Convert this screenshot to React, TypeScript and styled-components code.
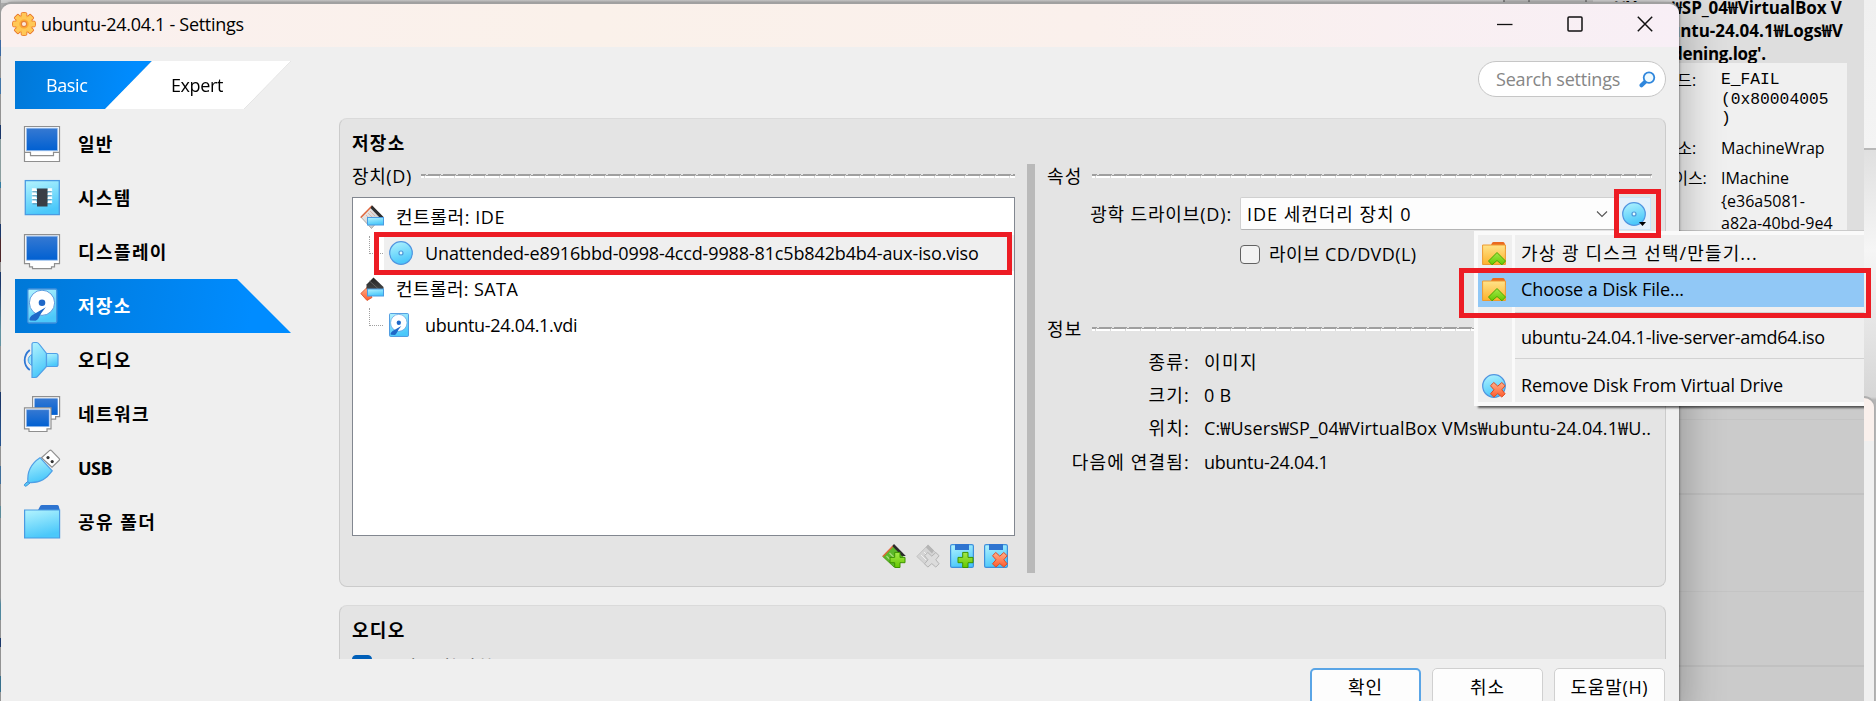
import React from 'react';
import styled, { createGlobalStyle, css } from 'styled-components';

const Global = createGlobalStyle`
  * { box-sizing: border-box; }
  body { margin: 0; background: #cbcbcb; overflow: hidden; }
`;

const RED = '#ed1c24';
const FONT = '"Open Sans", "Noto Sans CJK KR", sans-serif';

const Desktop = styled.div`
  position: relative;
  width: 1876px;
  height: 701px;
  overflow: hidden;
  background: linear-gradient(#dadada, #d2d2d2 3px, #b4b4b4 3px);
  font-family: ${FONT};
  font-size: 18px;
  color: #000;
`;

const Label = styled.span<{ $s?: number; $size?: number; $bold?: boolean; $color?: string; $dy?: number }>`
  white-space: pre;
  line-height: 24px;
  letter-spacing: ${p => p.$s ?? 0}px;
  font-size: ${p => p.$size ?? 18}px;
  font-weight: ${p => (p.$bold ? 700 : 400)};
  color: ${p => p.$color ?? '#000'};
  margin-top: ${p => p.$dy ?? 0}px;
`;

/* ---------- background windows ---------- */

const EdgeStrip = styled.div`
  position: absolute;
  inset: 0 auto 0 0;
  width: 1px;
  background: linear-gradient(
    #a8a8a8 0 40px, #4478b8 40px 56px, #a8a8a8 56px 78px, #4b86bf 78px 94px, #a8a8a8 94px 125px, #1f3f78 125px 139px,
    #9fb4b4 139px 182px, #3c8fb8 182px 188px, #a8a8a8 188px 224px, #1f3f78 224px 236px, #5a2c30 240px 262px,
    #a8a8a8 262px 272px, #1f3f78 272px 284px, #72a8b8 330px 346px, #a8a8a8 346px 392px, #1f3f78 392px 404px,
    #2c5fa0 434px 446px, #a8a8a8 446px 466px, #4a7fb0 466px 484px, #a8a8a8 484px 506px, #6aa0b0 506px 518px,
    #a8a8a8 518px 598px, #5c9cb4 604px 620px, #a8a8a8 620px 638px, #1f3f78 638px 647px, #a8a8a8 647px 676px,
    #3f7fa0 676px 692px, #a8a8a8 692px
  );
`;

const TopTabs = styled.div`
  position: absolute;
  inset: 0 auto auto 1503px;
  width: 90px;
  height: 6px;
  display: grid;
  grid-template-columns: 25px 57px 8px;
  & > i { border-left: 2px solid #8e8e8e; background: #c9c9c9; }
`;

const BackDialog = styled.div`
  position: absolute;
  inset: 0 auto auto 1593px;
  width: 271px;
  height: 701px;
  display: flex;
  flex-direction: column;
  background: #cbcbcb;
`;

const ErrorText = styled.div`
  display: flex;
  flex-direction: column;
  height: 63px;
  flex: none;
  padding: 0 0 0 22px;
  background: #dedede;
  & > span { line-height: 23px; margin-top: 0; }
  & > span:first-child { margin-top: -4px; }
  & > span:nth-child(2) { padding-left: 22px; }
  & > span:nth-child(3) { margin-left: -4px; }
`;

const ErrorDetails = styled.div`
  display: grid;
  grid-template-columns: 92px 1fr;
  grid-template-rows: 68px 30px 1fr;
  height: 167px;
  flex: none;
  padding: 6px 0 0 36px;
  overflow: hidden;
  background: #f0f0f0;
  border-right: 17px solid #dedede;
`;

const Mono = styled.div`
  font: 16.3px/19.7px "Liberation Mono", monospace;
  padding-top: 1px;
  white-space: pre;
`;

const Cell = styled.div`
  font-size: 16px;
  line-height: 22.6px;
  white-space: pre;
`;

const GridRows = styled.div`
  flex: 1;
  padding-top: 189px;
  & > hr { margin: 0; border: 0; background: #c4c4c4; height: 1px; }
  & > hr:nth-child(even) { height: 2px; margin: 73px 0 96px; background: #c1c1c1; }
`;

const RightEdge = styled.div`
  position: absolute;
  inset: 0 0 0 1864px;
  display: flex;
  flex-direction: column;
  background: linear-gradient(#f0f0f0, #f4f4f4 148px, #b8b8b8 148px 150px, #e0e0e0 150px, #f6f6f6 250px, #d6d6d6 397px, #b4b4b4 400px);
`;

const CornerWindow = styled.div`
  margin: 396px 1px 0 0;
  flex: 1;
  border: solid #aeaeae;
  border-width: 2px 1px 0 0;
  border-top-right-radius: 11px;
  background: linear-gradient(#faf0ec 43px, #f0f0f0 43px);
`;

/* ---------- settings window ---------- */

const Window = styled.div`
  position: absolute;
  inset: 2px auto auto 1px;
  width: 1678px;
  height: 720px;
  display: flex;
  flex-direction: column;
  background: #efefef;
  border-top: 2px solid #a0a0a0;
  border-radius: 11px 11px 0 0;
  box-shadow: 1px 0 2px rgba(0, 0, 0, 0.3), 5px 2px 42px rgba(0, 0, 0, 0.27);
`;

const TitleBar = styled.div`
  height: 43px;
  flex: none;
  display: flex;
  align-items: center;
  padding: 0 26px 4px 11px;
  background: linear-gradient(90deg, #faf0ef, #faf1ea 35%, #faf0ec 65%, #f8eff6);
  border-radius: 10px 10px 0 0;
  & > span { margin-left: 5px; flex: 1; }
`;

const Caption = styled.div`
  display: flex;
  align-items: center;
  gap: 54px;
`;

const Header = styled.div`
  display: flex;
  justify-content: space-between;
  align-items: flex-start;
  height: 71px;
  padding: 14px 13px 0 14px;
`;

const Tabs = styled.div`
  display: flex;
  width: 278px;
  height: 48px;
  filter: drop-shadow(0 0 0.6px #aaa);
`;

const Tab = styled.div<{ $active?: boolean }>`
  display: flex;
  align-items: center;
  ${p => p.$active
    ? css`
        width: 137px;
        padding-left: 31px;
        background: linear-gradient(100deg, #0078d7, #008cff 85%);
        clip-path: polygon(0 0, 100% 0, 66% 100%, 0 100%);
      `
    : css`
        width: 186px;
        margin-left: -47px;
        padding-left: 66px;
        background: #fff;
        clip-path: polygon(47px 0, 100% 0, 139px 100%, 0 100%);
      `}
`;

const Search = styled.div`
  display: flex;
  align-items: center;
  justify-content: space-between;
  width: 188px;
  height: 36px;
  padding: 0 9px 0 17px;
  border: 1px solid #c6c6c6;
  border-radius: 18px;
  background: #fff;
`;

const Main = styled.div`
  display: flex;
  height: 541px;
  flex: none;
  overflow: hidden;
`;

const Nav = styled.div`
  width: 289px;
  margin: -1px 0 0 14px;
`;

const NavItem = styled.div<{ $active?: boolean }>`
  display: flex;
  align-items: center;
  height: 54px;
  padding-left: 8px;
  gap: 17px;
  & > svg { flex: none; }
  ${p => p.$active && css`
    width: 276px;
    background: linear-gradient(100deg, #0078d7, #008cff 85%);
    clip-path: polygon(0 0, 222px 0, 100% 100%, 0 100%);
  `}
`;

const Content = styled.div`
  flex: 1;
  padding: 0 13px 0 35px;
  display: flex;
  flex-direction: column;
  gap: 18px;
`;

const Panel = styled.div<{ $h: number }>`
  height: ${p => p.$h}px;
  flex: none;
  display: flex;
  flex-direction: column;
  padding: 12px 12px 0 12px;
  background: #e4e4e4;
  border: 1px solid #cbcbcb;
  border-top-color: #dadada;
  border-radius: 8px;
`;

const Columns = styled.div`
  display: flex;
  align-items: flex-start;
  margin-top: 9px;
`;

const DeviceColumn = styled.div`
  width: 663px;
  display: flex;
  flex-direction: column;
`;

const Splitter = styled.div`
  width: 8px;
  height: 409px;
  margin: 0 12px 0;
  background: #b9b9b9;
`;

const Attributes = styled.div`
  width: 605px;
  display: flex;
  flex-direction: column;
`;

const GroupTitle = styled.div<{ $after?: number }>`
  display: flex;
  align-items: center;
  height: 23px;
  gap: 9px;
  margin-bottom: ${p => p.$after ?? 0}px;
`;

const Rule = styled.i`
  flex: 1;
  height: 4px;
  background:
    repeating-linear-gradient(90deg, transparent 0 5px, #e4e4e4 5px 7px, transparent 7px 15px) 0 0 / 100% 1px no-repeat,
    repeating-linear-gradient(90deg, transparent 0 4px, #d4d4d4 4px 5px, transparent 5px 15px) 0 1px / 100% 1px no-repeat,
    repeating-linear-gradient(90deg, transparent 0 3px, #dcdcdc 3px 4px, transparent 4px 15px) 0 2px / 100% 2px no-repeat,
    linear-gradient(#9f9f9f 2px, #fff 2px);
`;

const Tree = styled.div`
  height: 339px;
  margin-top: 10px;
  padding: 1px 0 0;
  background: #fff;
  border: 1px solid #828790;
`;

const TreeRow = styled.div<{ $child?: boolean; $selected?: boolean }>`
  display: flex;
  align-items: center;
  height: 36px;
  padding-left: ${p => (p.$child ? 16 : 7)}px;
  background: ${p => (p.$selected ? 'linear-gradient(90deg, #fff 31px, #efefef 31px)' : 'none')};
`;

const Branch = styled.i`
  width: 14px;
  height: 18px;
  margin: -17px 6px 0 0;
  border: dotted #a0a0a0;
  border-width: 0 0 1px 1px;
`;

const IconSlot = styled.div<{ $w: number }>`
  display: flex;
  width: ${p => p.$w}px;
  flex: none;
`;

const TreeTools = styled.div`
  display: flex;
  justify-content: flex-end;
  gap: 10px;
  padding: 8px 7px 0 0;
`;

const Field = styled.div<{ $h: number; $label: number; $gap: number }>`
  display: grid;
  grid-template-columns: ${p => p.$label}px auto;
  column-gap: ${p => p.$gap}px;
  align-items: center;
  height: ${p => p.$h}px;
  & > span:first-child { text-align: right; }
`;

const ComboRow = styled.div`
  display: flex;
  align-items: center;
  width: 412px;
`;

const Combo = styled.div`
  display: flex;
  align-items: center;
  justify-content: space-between;
  width: 378px;
  height: 33px;
  padding: 0 9px 0 6px;
  background: #fdfdfd;
  border: 1px solid #d0d0d0;
  border-bottom-color: #b4b4b4;
  border-radius: 2px;
`;

const DiscButton = styled.div`
  position: relative;
  width: 33px;
  height: 33px;
  padding: 4px 0 0 3px;
  background: #e5f1fb;
  border: 1px solid #cce4f7;
`;

const Arrow = styled.svg`
  position: absolute;
  right: 4px;
  bottom: 3px;
`;

const CheckRow = styled.div`
  display: flex;
  align-items: center;
  gap: 9px;
  height: 30px;
  margin: 9px 0 48px 193px;
`;

const Check = styled.i<{ $on?: boolean }>`
  width: 20px;
  height: 19px;
  flex: none;
  border: 1px solid ${p => (p.$on ? '#005fb8' : '#626262')};
  border-radius: 4px;
  background: ${p => (p.$on ? '#005fb8' : '#f3f3f3')};
`;

const AudioCheck = styled.div`
  display: flex;
  align-items: flex-start;
  gap: 10px;
  margin-top: 13px;
`;

const Footer = styled.div`
  display: flex;
  justify-content: flex-end;
  gap: 11px;
  padding: 9px 14px 0 0;
`;

const Button = styled.div<{ $primary?: boolean }>`
  display: flex;
  justify-content: center;
  align-items: center;
  width: 111px;
  height: 37px;
  background: #fdfdfd;
  border: ${p => (p.$primary ? '2px solid #5aa5e6' : '1px solid #d0d0d0')};
  border-radius: 5px;
`;

/* ---------- overlays ---------- */

const Menu = styled.div`
  position: absolute;
  inset: 231px auto auto 1474px;
  width: 390px;
  height: 175px;
  padding: 4px 0 4px 4px;
  background:
    linear-gradient(#fafafa, #fafafa) 38px 0 / 3px 100% no-repeat,
    linear-gradient(#fafafa, #fafafa) 0 0 / 4px 100% no-repeat,
    linear-gradient(#fafafa, #fafafa) 0 0 / 100% 4px no-repeat,
    linear-gradient(#fafafa, #fafafa) 0 100% / 100% 4px no-repeat,
    #efefef;
  box-shadow: 3px 3px 2px -1px rgba(0, 0, 0, 0.6);
  clip-path: inset(0 0 -10px 0);
`;

const MenuItem = styled.div<{ $active?: boolean; $h?: number }>`
  display: flex;
  align-items: center;
  height: ${p => p.$h ?? 37}px;
  padding-left: 4px;
  background: ${p => (p.$active ? '#91c8f6' : 'none')};
`;

const MenuLine = styled.div<{ $m: string }>`
  height: 1px;
  margin: ${p => p.$m};
  background: #d2d2d2;
`;

const Highlight = styled.div<{ $x: number; $y: number; $w: number; $h: number }>`
  position: absolute;
  left: ${p => p.$x}px;
  top: ${p => p.$y}px;
  width: ${p => p.$w}px;
  height: ${p => p.$h}px;
  border: 5px solid ${RED};
`;

/* ---------- icons ---------- */

const HiddenSvg = styled.svg`
  position: absolute;
`;

const Defs = () => (
  <HiddenSvg width="0" height="0">
    <defs>
      <linearGradient id="sky" x1="0" y1="0" x2="0.3" y2="1"><stop offset="0" stopColor="#b4f4fe" /><stop offset="1" stopColor="#4bc8fa" /></linearGradient>
      <linearGradient id="screen" x1="0" y1="0" x2="0" y2="1"><stop offset="0" stopColor="#3679d2" /><stop offset="1" stopColor="#0060d2" /></linearGradient>
      <linearGradient id="green" x1="0" y1="0" x2="0" y2="1"><stop offset="0" stopColor="#a4e84a" /><stop offset="1" stopColor="#64c800" /></linearGradient>
      <linearGradient id="orange" x1="0" y1="0" x2="0" y2="1"><stop offset="0" stopColor="#ffb089" /><stop offset="1" stopColor="#ff5a2c" /></linearGradient>
      <linearGradient id="yellow" x1="0" y1="0" x2="0" y2="1"><stop offset="0" stopColor="#ffe389" /><stop offset="1" stopColor="#fdb22c" /></linearGradient>
      <linearGradient id="silver" x1="0" y1="0" x2="1" y2="1"><stop offset="0" stopColor="#f4f4f4" /><stop offset="1" stopColor="#bdbdbd" /></linearGradient>
      <linearGradient id="dark" x1="0" y1="0" x2="0" y2="1"><stop offset="0" stopColor="#222" /><stop offset="1" stopColor="#555" /></linearGradient>
    </defs>
  </HiddenSvg>
);

const Svg = ({ s = 24, children }: { s?: number; children: React.ReactNode }) => (
  <svg width={s} height={s} viewBox={`0 0 ${s} ${s}`} fill="none">{children}</svg>
);

const teeth = [0, 45, 90, 135, 180, 225, 270, 315];
const Gear = () => (
  <Svg>
    {teeth.map(a => <rect key={a} x="9.2" y="0.6" width="5.6" height="6" rx="1.2" fill="#ffc65a" stroke="#ea7a2c" transform={`rotate(${a} 12 12)`} />)}
    <circle cx="12" cy="12" r="8.7" fill="#ffc04c" stroke="#ee8a34" strokeWidth="0.9" />
    {teeth.map(a => <rect key={a} x="9.8" y="1.3" width="4.4" height="6" rx="0.8" fill="#ffc857" transform={`rotate(${a} 12 12)`} />)}
    <circle cx="12" cy="12" r="4.6" fill="#fdab34" />
    <circle cx="12" cy="12" r="2.6" fill="#fbe9dc" stroke="#e8813a" strokeWidth="1.1" />
  </Svg>
);

const General = () => (
  <Svg s={38}>
    <path d="M1.5 1.5h35v35h-35z" fill="#fff" stroke="#8f8f8f" strokeWidth="1.2" />
    <path d="M3.5 3.2h31v22.5h-31z" fill="url(#screen)" stroke="#9cc0ee" strokeWidth="0.8" />
    <path d="M1.5 27.4h6v3.2h23v-3.2h6" stroke="#8f8f8f" strokeWidth="1.2" />
  </Svg>
);

const Chip = () => (
  <Svg s={38}>
    <rect x="2.3" y="1.6" width="34" height="34" fill="url(#sky)" stroke="#4a9be2" strokeWidth="1.3" />
    {[11.5, 15.5, 19.5, 23.5].map(y => <path key={y} d={`M9.5 ${y}h19M9.5 ${y - 1.4}h3M25.5 ${y - 1.4}h3`} stroke="#fff" strokeWidth="1.6" strokeLinecap="round" />)}
    {[12.8, 16.8, 20.8, 24.8].map(y => <path key={y} d={`M9.5 ${y}h19`} stroke="#3d6f90" strokeWidth="0.7" />)}
    <rect x="14" y="9.5" width="10.5" height="18" fill="#393d46" />
  </Svg>
);

const Display = () => (
  <Svg s={38}>
    <path d="M1.5 1.6h35v29h-5v3.200h-3v1.800h-19v-1.800h-3v-3.200h-5z" fill="#fff" stroke="#8f8f8f" strokeWidth="1.2" />
    <path d="M3.5 3.2h31v24h-31z" fill="url(#screen)" stroke="#9cc0ee" strokeWidth="0.8" />
  </Svg>
);

const DiskArt = () => (
  <>
    <rect x="4.8" y="2" width="29" height="34" rx="1.5" fill="url(#sky)" stroke="#3f8fdc" strokeWidth="1.3" />
    <circle cx="19" cy="15.8" r="12.6" fill="#fff" stroke="#5b9be0" strokeWidth="1" />
    <circle cx="19" cy="15.8" r="3.3" fill="#1f68c8" />
    <path d="M22.8 20.3 9.5 28c-3.2 2.2-3.6 5-2.4 5.5l5.5.2c2.4-.4 3.6-3.8 5.6-7.4z" fill="#1f68c8" />
  </>
);
const Disk = () => <Svg s={38}><DiskArt /></Svg>;
const SmallDisk = () => (
  <svg width="20" height="24" viewBox="4 1.200 30.600 35.600" preserveAspectRatio="none" fill="none"><DiskArt /></svg>
);

const Speaker = () => (
  <Svg s={38}>
    <path d="M6.8 9c-6.8 5.4-6.8 15.5 0 20" stroke="#2f78d4" strokeWidth="1.8" />
    <path d="M8.6 13.5c-4.6 3-4.6 8 0 11z" fill="#8fe4fd" stroke="#4f9fe6" strokeWidth="1" />
    <path d="M9 3q0-1.5 2-1.5h2.5q1.5 0 2.6 1.5L23.5 12.5v13L15 34.8Q13.8 36.5 12 36.5H9z" fill="url(#sky)" stroke="#4f9fe6" strokeWidth="1.2" />
    <path d="M23.5 12.5h9.5q2 0 2 2v9q0 2-2 2h-9.5z" fill="url(#sky)" stroke="#4f9fe6" strokeWidth="1.2" />
  </Svg>
);

const Network = () => (
  <Svg s={38}>
    <path d="M9.6 1.6h27v20h-4v2.6h-19v-2.6h-4z" fill="#fff" stroke="#8f8f8f" strokeWidth="1.2" />
    <path d="M11.5 3.4h23.2v16.5h-23.2z" fill="url(#screen)" />
    <path d="M1.5 12.8h26.5v21h-4v2.7h-18v-2.7h-4.5z" fill="#fff" stroke="#8f8f8f" strokeWidth="1.2" />
    <path d="M3.4 14.6h22.8v17h-22.8z" fill="url(#screen)" stroke="#9cc0ee" strokeWidth="0.6" />
  </Svg>
);

const Usb = () => (
  <Svg s={38}>
    <path d="m18.5 8.8 8.2-7.4q1-.7 1.8.2l7.7 8q.8 1-.2 1.9l-7 6.800z" fill="#fff" stroke="#8f8f8f" strokeWidth="1.2" />
    <circle cx="25" cy="8.6" r="1.6" fill="#333" />
    <circle cx="29.2" cy="12.6" r="1.6" fill="#333" />
    <path d="M5.8 31.5 1.6 35.2q-.8 1.6.7 2 1.2.2 5.4-3.9z" fill="#5cc8f4" stroke="#3f93dc" strokeWidth="1" />
    <path d="M5 33.5c-1.4-12 4-19.5 12-24.8l12.2 13.2C24 29 18 34.6 5 33.5z" fill="url(#sky)" stroke="#4f9fe6" strokeWidth="1.2" />
  </Svg>
);

const Folder = () => (
  <Svg s={38}>
    <path d="M14.5 8 17.2 3q.5-1 1.8-1H34q1.5 0 1.8 1.2L37 8v4H14.5z" fill="#2e74d0" />
    <path d="M1.6 7h35v28h-35z" fill="url(#sky)" stroke="#4a9be2" strokeWidth="1.2" />
  </Svg>
);

const Disc = () => (
  <Svg>
    <circle cx="12" cy="12" r="11.3" fill="url(#sky)" stroke="#5095e0" strokeWidth="1.2" />
    <circle cx="12" cy="12" r="2" fill="#e4fbff" stroke="#4f97d8" strokeWidth="1.2" />
  </Svg>
);

const IdeCtl = () => (
  <Svg>
    <path d="M.8 12 12 1l10 10.5L11.5 23.5z" fill="url(#silver)" stroke="#9a9a9a" strokeWidth=".8" />
    <path d="M.8 12.5 12 1" stroke="#e2673c" strokeWidth="1.5" />
    <path d="m12 .2 11.8 12-2.500 2L10.500 3z" fill="#2e2e2e" />
    <path d="m6 10 5 5m-3-7 5 5m-3-7 5 5" stroke="#d89a86" strokeWidth=".6" />
    <rect x="7.5" y="12.5" width="16" height="7.5" fill="url(#sky)" stroke="#4a9be2" />
  </Svg>
);

const SataCtl = () => (
  <Svg>
    <path d="M.8 16.5 7 10.5l5 10-5 3z" fill="url(#orange)" stroke="#d84a20" strokeWidth=".8" />
    <path d="M13.5.5 23.5 10v8H12L6.5 12V7.5z" fill="url(#dark)" />
    <path d="m9.5 4 10 9" stroke="#6b6b6b" strokeWidth=".8" />
    <rect x="7.500" y="12" width="16" height="7" fill="url(#sky)" stroke="#4a9be2" />
  </Svg>
);

type Mark = { fill?: string; stroke?: string };

const Plus = ({ fill = 'url(#green)', stroke = '#3d9400' }: Mark) => (
  <path transform="translate(7.5 7.8)" d="M5.2.6h5.3v5h5v5.3h-5v4.8H5.2v-4.8H.5V5.6h4.7z" fill={fill} stroke={stroke} strokeLinejoin="round" />
);

const Cross = ({ fill = 'url(#orange)', stroke = '#e04a22' }: Mark) => (
  <path transform="translate(7.8 7.8)" d="M4 .7 8 4.4l4-3.700 3.300 3.200L12 8l3.300 4-3.300 3.300L8 11.800l-4 3.500L.7 12 4.200 8 .7 3.900z" fill={fill} stroke={stroke} strokeLinejoin="round" />
);

const AddCtl = () => (
  <Svg>
    <path d="M.8 12.5 12 1l10 10L12 23z" fill="#5cb82c" stroke="#3d9400" strokeWidth=".8" />
    <path d="M.8 12.5 11 2" stroke="#e2673c" strokeWidth="1.4" />
    <path d="m4.500 12 6 6m-3-9 6 6" stroke="#a8dc7c" strokeWidth="1.2" />
    <path d="m12 0 11.800 12h-4L10.300 2z" fill="#2b2b2b" />
    <Plus />
  </Svg>
);

const RemoveCtl = () => (
  <Svg>
    <path d="M.8 12.5 12 1l10 10L12 23z" fill="#d4d4d4" stroke="#bdbdbd" strokeWidth=".8" />
    <path d="m5 11 5 5M8 8l5 5" stroke="#f0f0f0" />
    <path d="m12 .6 6 6-2 3-6-6z" fill="#b5b5b5" />
    <Cross fill="#dcdcdc" stroke="#b4b4b4" />
  </Svg>
);

const Floppy = ({ children }: { children: React.ReactNode }) => (
  <Svg>
    <rect x=".6" y=".6" width="22.8" height="22.8" rx="1.5" fill="url(#sky)" stroke="#3f8fdc" strokeWidth="1.2" />
    <path d="M5 0h14v6H5z" fill="#2e74d0" />
    {children}
  </Svg>
);

const PickFile = () => (
  <Svg>
    <path d="M8 5 10 1q.5-1 1.5-1H21q1 0 1.5 1L24 5v2H8z" fill="#ea6a20" />
    <path d="M.6 3h22.8v19.500H.6z" fill="url(#yellow)" stroke="#ee9a30" />
    <path d="m15 10.500 8.500 8.500-3.500 3.800-5-4.300-5 4.300-3.500-3.800z" fill="url(#green)" stroke="#4aa800" strokeLinejoin="round" />
  </Svg>
);

const RemoveDisc = () => (
  <Svg>
    <circle cx="12" cy="12" r="11.3" fill="url(#sky)" stroke="#5095e0" strokeWidth="1.2" />
    <Cross />
  </Svg>
);

const Magnifier = () => (
  <Svg s={17}>
    <path d="M6.500 10.500 2.500 14.300" stroke="#2f86dc" strokeWidth="4" strokeLinecap="round" />
    <circle cx="10" cy="6.600" r="5.300" fill="#eefaff" stroke="#2f86dc" strokeWidth="1.800" />
  </Svg>
);

/* ---------- data ---------- */

const sections: [string, () => React.ReactElement, number][] = [
  ['일반', General, 1.3], ['시스템', Chip, 1.3], ['디스플레이', Display, 1.4], ['저장소', Disk, 1.3],
  ['오디오', Speaker, 1.3], ['네트워크', Network, 1.4], ['USB', Usb, -0.5], ['공유 폴더', Folder, 1.5],
];

const info: [string, string, number, number][] = [
  ['종류:', '이미지', 1.2, 1.5],
  ['크기:', '0 B', 1.2, 0.3],
  ['위치:', 'C:₩Users₩SP_04₩VirtualBox VMs₩ubuntu-24.04.1₩U..', 1.2, 0.14],
  ['다음에 연결됨:', 'ubuntu-24.04.1', 1.2, -0.26],
];

export default function App() {
  return (
    <Desktop>
      <Global />
      <Defs />
      <TopTabs><i /><i /><i /></TopTabs>
      <BackDialog>
        <ErrorText>
          <Label $bold $size={17} $s={-0.1}>₩Users₩SP_04₩VirtualBox V</Label>
          <Label $bold $size={17} $s={0}>₩ubuntu-24.04.1₩Logs₩V</Label>
          <Label $bold $size={17} $s={-0.3}>BoxHardening.log'.</Label>
        </ErrorText>
        <ErrorDetails>
          <Cell>결과 코드:</Cell>
          <Mono>{'E_FAIL\n(0x80004005\n)'}</Mono>
          <Cell>구성 요소:</Cell>
          <Cell>MachineWrap</Cell>
          <Cell>인터페이스:</Cell>
          <Cell>{'IMachine\n{e36a5081-\na82a-40bd-9e4'}</Cell>
        </ErrorDetails>
        <GridRows><hr /><hr /><hr /><hr /></GridRows>
      </BackDialog>
      <RightEdge><CornerWindow /></RightEdge>
      <EdgeStrip />

      <Window>
        <TitleBar>
          <Gear />
          <Label $s={-0.3}>ubuntu-24.04.1 - Settings</Label>
          <Caption>
            <svg width="16" height="16"><path d="M0 8.500h15.500" stroke="#111" strokeWidth="1.3" /></svg>
            <svg width="16" height="16" fill="none"><rect x="1" y="1" width="14" height="14" rx="1" stroke="#111" strokeWidth="1.5" /></svg>
            <svg width="16" height="16"><path d="m.8.8 14.4 14.4M15.200.8.8 15.200" stroke="#111" strokeWidth="1.5" /></svg>
          </Caption>
        </TitleBar>
        <Header>
          <Tabs>
            <Tab $active><Label $s={-0.4} $color="#fff">Basic</Label></Tab>
            <Tab><Label $s={-0.4}>Expert</Label></Tab>
          </Tabs>
          <Search><Label $s={-0.2} $color="#868686">Search settings</Label><Magnifier /></Search>
        </Header>
        <Main>
          <Nav>
            {sections.map(([name, Icon, s]) => (
              <NavItem key={name} $active={name === '저장소'}>
                <Icon />
                <Label $bold $s={s} $color={name === '저장소' ? '#fff' : '#000'}>{name}</Label>
              </NavItem>
            ))}
          </Nav>
          <Content>
            <Panel $h={469}>
              <Label $bold $s={1.3}>저장소</Label>
              <Columns>
                <DeviceColumn>
                  <GroupTitle><Label $s={0.6}>장치(D)</Label><Rule /></GroupTitle>
                  <Tree>
                    <TreeRow><IconSlot $w={36}><IdeCtl /></IconSlot><Label $s={0.6}>컨트롤러: IDE</Label></TreeRow>
                    <TreeRow $child $selected><Branch /><IconSlot $w={36}><Disc /></IconSlot><Label $s={-0.14}>Unattended-e8916bbd-0998-4ccd-9988-81c5b842b4b4-aux-iso.viso</Label></TreeRow>
                    <TreeRow><IconSlot $w={36}><SataCtl /></IconSlot><Label $s={0.4}>컨트롤러: SATA</Label></TreeRow>
                    <TreeRow $child><Branch /><IconSlot $w={36}><SmallDisk /></IconSlot><Label $s={-0.3}>ubuntu-24.04.1.vdi</Label></TreeRow>
                  </Tree>
                  <TreeTools>
                    <AddCtl /><RemoveCtl />
                    <Floppy><Plus /></Floppy>
                    <Floppy><Cross /></Floppy>
                  </TreeTools>
                </DeviceColumn>
                <Splitter />
                <Attributes>
                  <GroupTitle $after={10}><Label $s={1.2}>속성</Label><Rule /></GroupTitle>
                  <Field $h={33} $label={185} $gap={8}>
                    <Label $s={0.85}>광학 드라이브(D):</Label>
                    <ComboRow>
                      <Combo>
                        <Label $s={0.98}>IDE 세컨더리 장치 0</Label>
                        <svg width="12" height="8" fill="none"><path d="m1 1.500 5 5 5-5" stroke="#555" strokeWidth="1.1" /></svg>
                      </Combo>
                      <DiscButton><Disc /><Arrow width="7" height="5"><path d="M0 1h7L3.500 5z" fill="#000" /></Arrow></DiscButton>
                    </ComboRow>
                  </Field>
                  <CheckRow><Check /><Label $s={0.4}>라이브 CD/DVD(L)</Label></CheckRow>
                  <GroupTitle $after={5}><Label $s={1.2}>정보</Label><Rule /></GroupTitle>
                  {info.map(([k, v, ks, vs]) => (
                    <Field key={k} $h={33.4} $label={143} $gap={14}><Label $s={ks}>{k}</Label><Label $s={vs}>{v}</Label></Field>
                  ))}
                </Attributes>
              </Columns>
            </Panel>
            <Panel $h={200}>
              <Label $bold $s={1.3}>오디오</Label>
              <AudioCheck><Check $on /><Label $s={1.2}>오디오 활성화(A)</Label></AudioCheck>
            </Panel>
          </Content>
        </Main>
        <Footer>
          <Button $primary><Label $s={1}>확인</Label></Button>
          <Button><Label $s={1}>취소</Label></Button>
          <Button><Label $s={0.7}>도움말(H)</Label></Button>
        </Footer>
      </Window>

      <Highlight $x={374} $y={232} $w={638} $h={43} />
      <Menu>
        <MenuItem $h={37}><IconSlot $w={39}><PickFile /></IconSlot><Label $s={1.1} $dy={-2}>가상 광 디스크 선택/만들기...</Label></MenuItem>
        <MenuItem $active $h={35}><IconSlot $w={39}><PickFile /></IconSlot><Label $s={-0.1} $dy={-1}>Choose a Disk File...</Label></MenuItem>
        <MenuLine $m="5px 0 6px 37px" />
        <MenuItem><IconSlot $w={39} /><Label $s={-0.26} $dy={-1}>ubuntu-24.04.1-live-server-amd64.iso</Label></MenuItem>
        <MenuLine $m="2px 0 8px 37px" />
        <MenuItem><IconSlot $w={39}><RemoveDisc /></IconSlot><Label $s={-0.1} $dy={-1}>Remove Disk From Virtual Drive</Label></MenuItem>
      </Menu>
      <Highlight $x={1614} $y={189} $w={47} $h={49} />
      <Highlight $x={1459} $y={268} $w={412} $h={50} />
    </Desktop>
  );
}
